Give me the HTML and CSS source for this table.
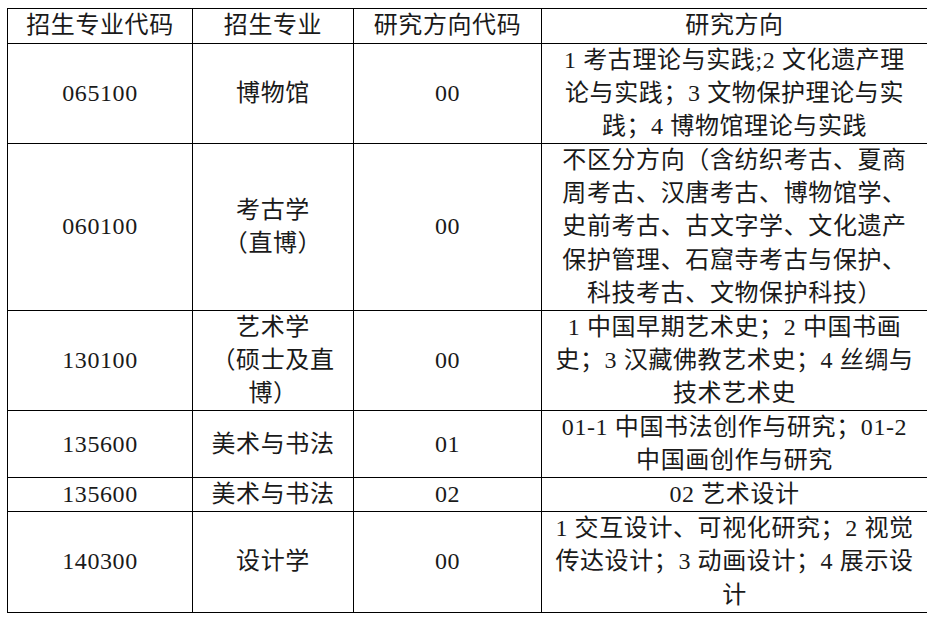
FILE: index.html
```html
<!DOCTYPE html>
<html lang="zh-CN">
<head>
<meta charset="utf-8">
<title>招生专业</title>
<link rel="stylesheet" href="styles.css">
</head>
<body>
<table class="plan">
  <colgroup>
    <col class="c1"><col class="c2"><col class="c3"><col class="c4">
  </colgroup>
  <thead>
    <tr class="head">
      <th>招生专业代码</th>
      <th>招生专业</th>
      <th>研究方向代码</th>
      <th>研究方向</th>
    </tr>
  </thead>
  <tbody>
    <tr>
      <td>065100</td>
      <td>博物馆</td>
      <td>00</td>
      <td>1 考古理论与实践;2 文化遗产理<br>论与实践；3 文物保护理论与实<br>践；4 博物馆理论与实践</td>
    </tr>
    <tr>
      <td>060100</td>
      <td>考古学<br>（直博）</td>
      <td>00</td>
      <td>不区分方向（含纺织考古、夏商<br>周考古、汉唐考古、博物馆学、<br>史前考古、古文字学、文化遗产<br>保护管理、石窟寺考古与保护、<br>科技考古、文物保护科技）</td>
    </tr>
    <tr>
      <td>130100</td>
      <td>艺术学<br>（硕士及直<br>博）</td>
      <td>00</td>
      <td>1 中国早期艺术史；2 中国书画<br>史；3 汉藏佛教艺术史；4 丝绸与<br>技术艺术史</td>
    </tr>
    <tr>
      <td>135600</td>
      <td>美术与书法</td>
      <td>01</td>
      <td>01-1 中国书法创作与研究；01-2<br>中国画创作与研究</td>
    </tr>
    <tr>
      <td>135600</td>
      <td>美术与书法</td>
      <td>02</td>
      <td>02 艺术设计</td>
    </tr>
    <tr>
      <td>140300</td>
      <td>设计学</td>
      <td>00</td>
      <td>1 交互设计、可视化研究；2 视觉<br>传达设计；3 动画设计；4 展示设<br>计</td>
    </tr>
  </tbody>
</table>
</body>
</html>
```

FILE: styles.css
```css
html, body {
  background: #ffffff;
}

body {
  margin: 8px 7px;
  font-family: "Liberation Serif", "Times New Roman", "Noto Sans CJK SC", serif;
  font-size: 24px;
  font-weight: 400;
  color: #1a1a1a;
}

.plan {
  width: 920px;
  border-collapse: collapse;
  table-layout: fixed;
  font-family: "Liberation Serif", "Noto Sans CJK SC", serif;
}

.c1 { width: 185px; }
.c2 { width: 161px; }
.c3 { width: 188px; }
.c4 { width: 386px; }

.plan th,
.plan td {
  border: 1px solid #000000;
  padding: 0;
  text-align: center;
  vertical-align: middle;
  line-height: 33.1px;
  letter-spacing: 0.6px;
  white-space: nowrap;
  font-weight: 400;
}

.head th {
  height: 34px;
}
```
